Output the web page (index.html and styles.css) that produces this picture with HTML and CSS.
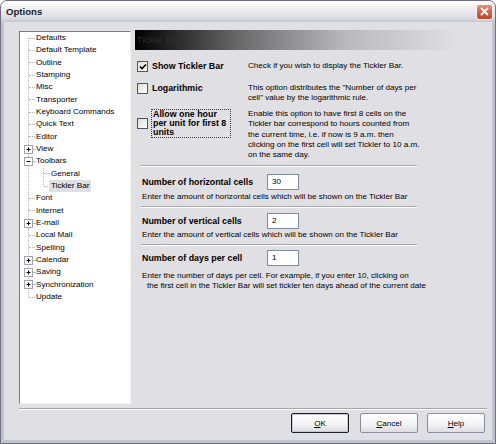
FILE: index.html
```html
<!DOCTYPE html>
<html>
<head>
<meta charset="utf-8">
<title>Options</title>
<link rel="stylesheet" href="styles.css">
</head>
<body>
<div class="window">
  <div class="titlebar">
    <span class="title">Options</span>
    <span class="close"><svg width="9" height="9" viewBox="0 0 9 9"><path d="M1 1L8 8M8 1L1 8" stroke="#fff" stroke-width="1.8" fill="none"/></svg></span>
  </div>
  <div class="client">
    <div class="main">
      <div class="tree">
        <div class="items">
          <div class="row"><span class="g"><span class="stub"></span></span><span class="t">Defaults</span></div>
          <div class="row"><span class="g"><span class="stub"></span></span><span class="t">Default Template</span></div>
          <div class="row"><span class="g"><span class="stub"></span></span><span class="t">Outline</span></div>
          <div class="row"><span class="g"><span class="stub"></span></span><span class="t">Stamping</span></div>
          <div class="row"><span class="g"><span class="stub"></span></span><span class="t">Misc</span></div>
          <div class="row"><span class="g"><span class="stub"></span></span><span class="t">Transporter</span></div>
          <div class="row"><span class="g"><span class="stub"></span></span><span class="t">Keyboard Commands</span></div>
          <div class="row"><span class="g"><span class="stub"></span></span><span class="t">Quick Text</span></div>
          <div class="row"><span class="g"><span class="stub"></span></span><span class="t">Editor</span></div>
          <div class="row"><span class="g"><span class="box"><svg width="7" height="7" viewBox="0 0 7 7"><path d="M1.5 3.5H5.5M3.5 1.5V5.5" stroke="#000" stroke-width="1" fill="none"/></svg></span><span class="stub s"></span></span><span class="t">View</span></div>
          <div class="row"><span class="g"><span class="box"><svg width="7" height="7" viewBox="0 0 7 7"><path d="M1.5 3.5H5.5" stroke="#000" stroke-width="1" fill="none"/></svg></span><span class="stub s"></span></span><span class="t">Toolbars</span></div>
          <div class="sub">
            <div class="row"><span class="g"><span class="stub"></span></span><span class="t">General</span></div>
            <div class="row"><span class="g"><span class="stub"></span></span><span class="t sel">Tickler Bar</span></div>
          </div>
          <div class="row"><span class="g"><span class="stub"></span></span><span class="t">Font</span></div>
          <div class="row"><span class="g"><span class="stub"></span></span><span class="t">Internet</span></div>
          <div class="row"><span class="g"><span class="box"><svg width="7" height="7" viewBox="0 0 7 7"><path d="M1.5 3.5H5.5M3.5 1.5V5.5" stroke="#000" stroke-width="1" fill="none"/></svg></span><span class="stub s"></span></span><span class="t">E-mail</span></div>
          <div class="row"><span class="g"><span class="stub"></span></span><span class="t">Local Mail</span></div>
          <div class="row"><span class="g"><span class="stub"></span></span><span class="t">Spelling</span></div>
          <div class="row"><span class="g"><span class="box"><svg width="7" height="7" viewBox="0 0 7 7"><path d="M1.5 3.5H5.5M3.5 1.5V5.5" stroke="#000" stroke-width="1" fill="none"/></svg></span><span class="stub s"></span></span><span class="t">Calendar</span></div>
          <div class="row"><span class="g"><span class="box"><svg width="7" height="7" viewBox="0 0 7 7"><path d="M1.5 3.5H5.5M3.5 1.5V5.5" stroke="#000" stroke-width="1" fill="none"/></svg></span><span class="stub s"></span></span><span class="t">Saving</span></div>
          <div class="row"><span class="g"><span class="box"><svg width="7" height="7" viewBox="0 0 7 7"><path d="M1.5 3.5H5.5M3.5 1.5V5.5" stroke="#000" stroke-width="1" fill="none"/></svg></span><span class="stub s"></span></span><span class="t">Synchronization</span></div>
          <div class="row"><span class="g"><span class="stub"></span></span><span class="t">Update</span></div>
        </div>
      </div>
      <div class="panel">
        <div class="header">Tickler Bar</div>
        <div class="opt r1">
          <div class="lab"><span class="cb"><svg width="8" height="8" viewBox="0 0 8 8"><path d="M1 3.5L3 5.5L7 1.5" stroke="#000" stroke-width="1.6" fill="none"/></svg></span><b>Show Tickler Bar</b></div>
          <div class="desc">Check if you wish to display the Tickler Bar.</div>
        </div>
        <div class="opt r2">
          <div class="lab"><span class="cb"></span><b>Logarithmic</b></div>
          <div class="desc">This option distributes the "Number of days per<br>cell" value by the logarithmic rule.</div>
        </div>
        <div class="opt r3">
          <div class="lab"><span class="cb"></span><b class="focus">Allow one hour<br>per unit for first 8<br>units</b></div>
          <div class="desc">Enable this option to have first 8 cells on the<br>Tickler bar correspond to hours counted from<br>the current time, i.e. if now is 9 a.m. then<br>clicking on the first cell will set Tickler to 10 a.m.<br>on the same day.</div>
        </div>
        <div class="hr h1"></div>
        <div class="field f1"><b>Number of horizontal cells</b><span class="inp">30</span></div>
        <div class="fdesc d1">Enter the amount of horizontal cells which will be shown on the Tickler Bar</div>
        <div class="hr h2"></div>
        <div class="field f2"><b>Number of vertical cells</b><span class="inp">2</span></div>
        <div class="fdesc d2">Enter the amount of vertical cells which will be shown on the Tickler Bar</div>
        <div class="hr h3"></div>
        <div class="field f3"><b>Number of days per cell</b><span class="inp">1</span></div>
        <div class="fdesc d3">Enter the number of days per cell. For example, if you enter 10, clicking on<br><span class="ind">the first cell in the Tickler Bar will set tickler ten days ahead of the current date</span></div>
      </div>
    </div>
    <div class="bsep"></div>
    <div class="buttons">
      <span class="btn def"><u>O</u>K</span>
      <span class="btn cancel"><u>C</u>ancel</span>
      <span class="btn help"><u>H</u>elp</span>
    </div>
  </div>
</div>
</body>
</html>
```

FILE: styles.css
```css
* { box-sizing: border-box; }

html, body {
  margin: 0;
  padding: 0;
  background: #ffffff;
}

body {
  font-family: "Liberation Sans", Arial, sans-serif;
  font-size: 8.1px;
  color: #000;
}

.window {
  width: 496px;
  height: 444px;
  border: 1px solid #6e6e80;
  border-radius: 7px 7px 0 0;
  background: #c4c4d0;
  display: flex;
  flex-direction: column;
  overflow: hidden;
}

.titlebar {
  height: 21px;
  flex: none;
  display: flex;
  align-items: center;
  justify-content: space-between;
  padding: 0 2px 0 5px;
  background: linear-gradient(#ffffff 0%, #f0f0f4 35%, #dcdce4 80%, #c4c4d0 100%);
}

.title {
  font-weight: bold;
  font-size: 9.6px;
  color: #1c1c2c;
}

.close {
  width: 17px;
  height: 16px;
  border-radius: 3px;
  border: 1px solid #f4f4f4;
  background: linear-gradient(#eb9079, #d25a42 60%, #c2452d);
  display: flex;
  align-items: center;
  justify-content: center;
}

.client {
  flex: 1;
  margin: 0 3px 3px;
  background: #e0dfe3;
  padding: 8px 7px 0 15px;
  display: flex;
  flex-direction: column;
}

.main {
  height: 374px;
  flex: none;
  display: flex;
  gap: 4px;
}

/* tree */
.tree {
  width: 112px;
  height: 373px;
  margin-top: 1px;
  background: #fff;
  border: 1px solid;
  border-color: #7c7c84 #f4f3ee #f4f3ee #7c7c84;
  flex: none;
}

.items, .sub {
  background-image: repeating-linear-gradient(to bottom, #b4b4b4 0 1px, transparent 1px 2px);
  background-repeat: no-repeat;
}

.items {
  background-size: 1px calc(100% - 12.33px);
  background-position: 8px 6px;
}

.sub {
  padding-left: 15px;
  background-size: 1px calc(100% - 6px);
  background-position: 23px 0;
}

.row {
  height: 12.33px;
  display: flex;
  align-items: center;
  white-space: nowrap;
}

.g {
  width: 15px;
  height: 100%;
  flex: none;
  display: flex;
  align-items: center;
}

.stub {
  margin-left: 9px;
  width: 6px;
  border-top: 1px dotted #b4b4b4;
}

.stub.s {
  margin-left: 0;
  width: 2px;
}

.box {
  margin-left: 4px;
  width: 9px;
  height: 9px;
  border: 1px solid #a4a4ae;
  background: #fff;
  display: flex;
  align-items: center;
  justify-content: center;
  flex: none;
}

.t {
  padding: 0 1px;
  line-height: 12px;
}

.t.sel {
  background: #e0dfe3;
  margin-left: -1px;
  padding: 0 2px;
}

/* right panel */
.panel {
  flex: 1;
  display: flex;
  flex-direction: column;
}

.header {
  height: 20px;
  flex: none;
  background: linear-gradient(to right, #000 0%, #6a6a6b 30%, #b9b8bb 60%, #e0dfe3 92%);
  color: #2e2e2e;
  padding-left: 2px;
  line-height: 20px;
  font-size: 9px;
}

.opt {
  display: grid;
  grid-template-columns: 111px 1fr;
  padding-left: 2px;
  line-height: 10.3px;
}

.r1 { margin-top: 11px; }
.r2 { margin-top: 11px; }
.r3 { margin-top: 5.4px; }

.lab {
  display: flex;
  align-items: center;
  align-self: start;
}

.cb {
  width: 11px;
  height: 11px;
  flex: none;
  border: 1px solid #55556a;
  background: linear-gradient(135deg, #dcdcd4, #ffffff);
  margin-right: 4px;
  display: flex;
  align-items: center;
  justify-content: center;
}

b {
  font-weight: bold;
  font-size: 8.85px;
}

.focus {
  border: 1px dotted #333;
  width: 80px;
  margin-left: -1px;
  padding-left: 1px;
  line-height: 9px;
}

.hr {
  height: 2px;
  flex: none;
  width: 276px;
  margin-left: 6px;
  border-top: 1px solid #a7a6aa;
  border-bottom: 1px solid #ffffff;
}

.h1 { margin-top: 4.5px; }
.h2 { margin-top: 3.7px; }
.h3 { margin-top: 3.7px; }

.field {
  display: flex;
  align-items: center;
  padding-left: 7px;
}

.field b {
  width: 125px;
  flex: none;
}

.f1 { margin-top: 7px; }
.f2 { margin-top: 5px; }
.f3 { margin-top: 4px; }

.inp {
  width: 32px;
  height: 16px;
  border: 1px solid #7f8c9c;
  background: #fff;
  padding-left: 4px;
  line-height: 14px;
}

.fdesc {
  padding-left: 7px;
  line-height: 10.3px;
}

.d1 { margin-top: 2px; }
.d2 { margin-top: 1px; }
.d3 { margin-top: 5px; }

.ind { padding-left: 5px; }

/* bottom */
.bsep {
  margin-top: 4px;
  margin-right: -2px;
  height: 2px;
  flex: none;
  border-top: 1px solid #a7a6aa;
  border-bottom: 1px solid #ffffff;
}

.buttons {
  display: flex;
  justify-content: flex-end;
  margin-top: 3px;
}

.btn {
  width: 58px;
  height: 20px;
  border: 1px solid #8c8c9c;
  border-radius: 2px;
  background: linear-gradient(#ffffff, #f2f2f4 60%, #dcdce2);
  display: flex;
  align-items: center;
  justify-content: center;
}

.btn.def {
  border-color: #1e1e2a;
  box-shadow: inset 0 0 0 1px #c8c8d8;
}

.cancel { margin-left: 11px; }
.help { margin-left: 9px; }
```
